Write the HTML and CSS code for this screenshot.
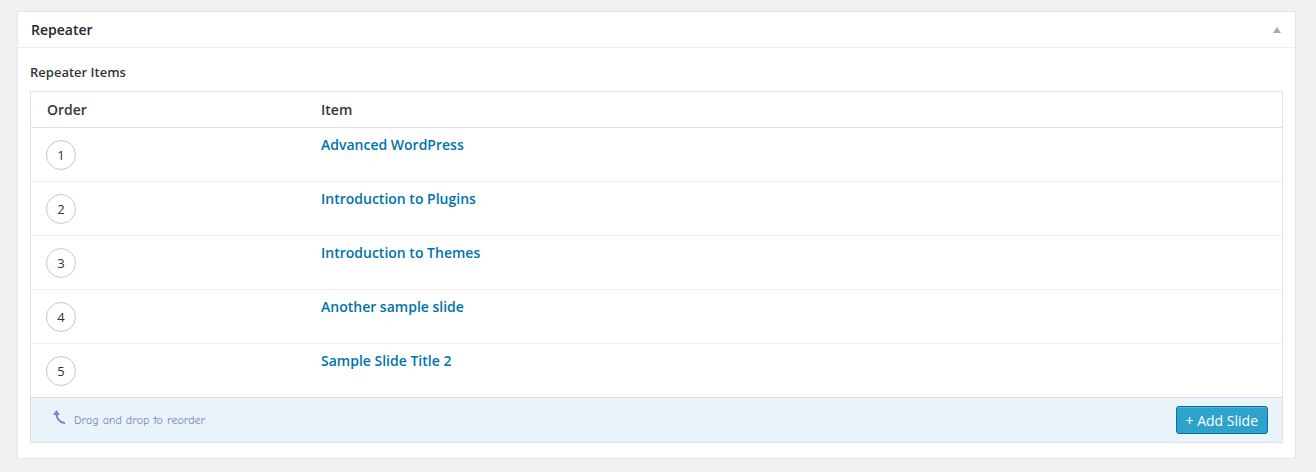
FILE: index.html
```html
<!DOCTYPE html>
<html>
<head>
<meta charset="utf-8">
<link rel="stylesheet" href="styles.css">
</head>
<body>
<div class="postbox">
  <div class="hndle">
    <span class="title">Repeater</span>
    <span class="toggle"></span>
  </div>
  <div class="inside">
    <div class="label">Repeater Items</div>
    <div class="rtable">
      <div class="row head">
        <div class="c-order">Order</div>
        <div class="c-item">Item</div>
      </div>
      <div class="row">
        <div class="c-order"><span class="num">1</span></div>
        <div class="c-item"><a class="link">Advanced WordPress</a></div>
      </div>
      <div class="row">
        <div class="c-order"><span class="num">2</span></div>
        <div class="c-item"><a class="link">Introduction to Plugins</a></div>
      </div>
      <div class="row">
        <div class="c-order"><span class="num">3</span></div>
        <div class="c-item"><a class="link">Introduction to Themes</a></div>
      </div>
      <div class="row">
        <div class="c-order"><span class="num">4</span></div>
        <div class="c-item"><a class="link">Another sample slide</a></div>
      </div>
      <div class="row">
        <div class="c-order"><span class="num">5</span></div>
        <div class="c-item"><a class="link">Sample Slide Title 2</a></div>
      </div>
      <div class="foot">
        <div class="hint">
          <svg class="arrow" width="12" height="16" viewBox="0 0 12 16">
            <path d="M3.5 3 C3.2 9 5.5 13 11.5 14" fill="none" stroke="#6f8db9" stroke-width="2" stroke-linecap="round"/>
            <path d="M0 6 L3.5 1 L7 6 Z" fill="#6f8db9"/>
          </svg>
          <span>Drag and drop to reorder</span>
        </div>
        <button class="btn">+ Add Slide</button>
      </div>
    </div>
  </div>
</div>
</body>
</html>
```

FILE: styles.css
```css
html, body {
  margin: 0;
  padding: 0;
}
body {
  background: #f1f1f1;
  padding: 11px 20px 0 17px;
  font-family: "Open Sans", "Liberation Sans", sans-serif;
  color: #23282d;
}
.postbox {
  background: #fff;
  border: 1px solid #e5e5e5;
  box-shadow: 0 1px 1px rgba(0,0,0,0.04);
  width: 1277px;
}
.hndle {
  display: flex;
  align-items: center;
  justify-content: space-between;
  height: 35px;
  padding: 0 14px 0 13px;
  border-bottom: 1px solid #eee;
}
.title {
  font-size: 14px;
  font-weight: 600;
  color: #23282d;
}
.toggle {
  width: 0;
  height: 0;
  border-left: 4px solid transparent;
  border-right: 4px solid transparent;
  border-bottom: 6px solid #a8a8a8;
}
.inside {
  padding: 15px 12px 15px 12px;
}
.label {
  font-size: 13px;
  font-weight: 600;
  line-height: 19px;
  color: #32373c;
  margin-bottom: 9px;
}
.rtable {
  border: 1px solid #e1e1e1;
}
.row {
  display: grid;
  grid-template-columns: 274px 1fr;
  height: 53px;
  border-top: 1px solid #f1f1f1;
}
.row.head {
  height: 35px;
  border-top: none;
  border-bottom: 1px solid #e1e1e1;
  align-items: center;
  font-size: 14px;
  font-weight: 600;
  color: #32373c;
}
.row.head + .row {
  border-top: none;
}
.c-order {
  padding-left: 15px;
}
.row.head .c-order {
  padding-left: 16px;
}
.row:not(.head) .c-order {
  padding-top: 12px;
}
.row.head + .row .c-order {
  padding-top: 12px;
}
.c-item {
  padding-left: 16px;
}
.row:not(.head) .c-item {
  padding-top: 5px;
}
.num {
  display: flex;
  align-items: center;
  justify-content: center;
  width: 28px;
  height: 28px;
  border: 1px solid #c8c8c8;
  border-radius: 50%;
  font-size: 13px;
  color: #333;
}
.link {
  font-size: 14px;
  font-weight: 600;
  line-height: 20px;
  color: #0073aa;
  text-decoration: none;
}
.foot {
  display: flex;
  align-items: center;
  justify-content: space-between;
  height: 44px;
  padding: 0 14px 0 22px;
  background: #eaf2fa;
  border-top: 1px solid #d3dbe3;
}
.hint {
  display: flex;
  align-items: center;
  gap: 9px;
  font-family: "Comic Neue", "DejaVu Sans", cursive;
  font-size: 12px;
  color: #6f8db9;
}
.arrow {
  margin-top: -6px;
}
.btn {
  height: 28px;
  padding: 0 9px;
  background: #2ea2cc;
  border: 1px solid #0074a2;
  border-radius: 3px;
  color: #fff;
  font-family: "Open Sans", "Liberation Sans", sans-serif;
  font-size: 14px;
  box-shadow: inset 0 1px 0 rgba(120,200,230,0.5);
}
```
